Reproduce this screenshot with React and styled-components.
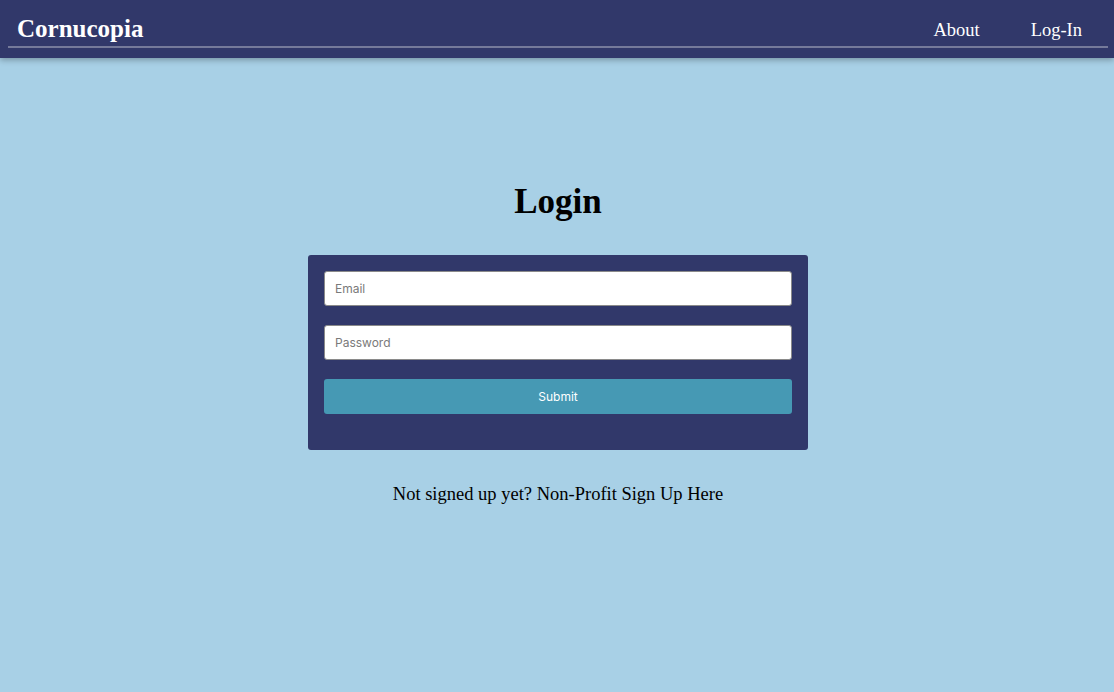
import React from 'react';
import styled, { createGlobalStyle } from 'styled-components';

const GlobalStyle = createGlobalStyle`
  html, body {
    margin: 0;
    padding: 0;
    background: #a8d0e6;
    font-family: "Liberation Serif", serif;
  }
  * { box-sizing: border-box; }
`;

export default function App() {
  return (
    <>
      <GlobalStyle />
      <NavBar>
        <NavInner>
          <Brand>Cornucopia</Brand>
          <NavLinks>
            <NavLink>About</NavLink>
            <NavLink>Log-In</NavLink>
          </NavLinks>
        </NavInner>
      </NavBar>
      <Main>
        <Title>Login</Title>
        <Card>
          <Input type="email" placeholder="Email" />
          <Input type="password" placeholder="Password" />
          <SubmitButton>Submit</SubmitButton>
        </Card>
        <SignUp>Not signed up yet? Non-Profit Sign Up Here</SignUp>
      </Main>
    </>
  );
}

const NavBar = styled.header`
  height: 58px;
  background: #31386a;
  padding: 0 6px 0 8px;
  box-shadow: 0 2px 6px rgba(0, 0, 0, 0.3);
`;

const NavInner = styled.div`
  height: 48px;
  display: flex;
  align-items: center;
  justify-content: space-between;
  border-bottom: 2px solid #757a9a;
  padding: 0 26px 0 9px;
`;

const Brand = styled.div`
  color: #ffffff;
  font-size: 25px;
  font-weight: 700;
  padding-top: 12px;
`;

const NavLinks = styled.nav`
  display: flex;
  gap: 51px;
  padding-top: 15px;
`;

const NavLink = styled.a`
  color: #ffffff;
  font-size: 18.5px;
  cursor: pointer;
`;

const Main = styled.main`
  display: flex;
  flex-direction: column;
  align-items: center;
  padding-top: 122px;
  padding-left: 2px;
`;

const Title = styled.h1`
  margin: 0;
  font-size: 35px;
  font-weight: 700;
  color: #000;
  line-height: 44px;
`;

const Card = styled.form`
  margin-top: 31px;
  width: 500px;
  background: #31386a;
  border-radius: 3px;
  padding: 16px 16px 36px;
  display: flex;
  flex-direction: column;
  gap: 19px;
`;

const Input = styled.input`
  height: 35px;
  border: 1px solid #8a8a8a;
  border-radius: 3px;
  padding: 0 10px;
  font-family: Inter, "Liberation Sans", sans-serif;
  font-size: 12px;
  background: #fff;
  &::placeholder { color: #7a7a7a; }
`;

const SubmitButton = styled.button`
  height: 35px;
  border: none;
  border-radius: 3px;
  background: #4699b4;
  color: #ffffff;
  font-family: Inter, "Liberation Sans", sans-serif;
  font-size: 12px;
  cursor: pointer;
`;

const SignUp = styled.p`
  margin: 34px 0 0;
  font-size: 18.5px;
  color: #000;
`;
